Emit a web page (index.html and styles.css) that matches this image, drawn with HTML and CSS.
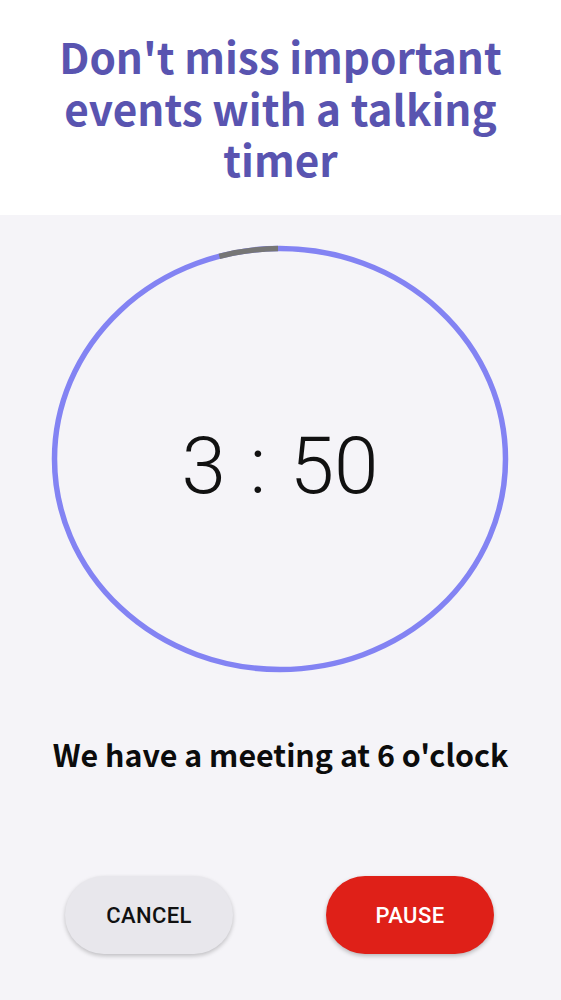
FILE: index.html
```html
<!DOCTYPE html>
<html>
<head>
<meta charset="utf-8">
<link rel="stylesheet" href="styles.css">
</head>
<body>
<header class="hero">
  <h1 class="title">Don't miss important events with a talking timer</h1>
</header>
<main class="screen">
  <div class="dial">
    <svg class="ring" width="561" height="460" viewBox="0 230 561 460">
      <ellipse cx="280" cy="459" rx="225.5" ry="210.5" fill="none" stroke="#8383f3" stroke-width="5.5"/>
      <path d="M 219.3 256.3 A 225.5 210.5 0 0 1 278 248.5" fill="none" stroke="#767676" stroke-width="5.5"/>
    </svg>
    <div class="time">3 : 50</div>
  </div>
  <p class="message">We have a meeting at 6 o'clock</p>
  <div class="actions">
    <button class="btn btn-cancel">CANCEL</button>
    <button class="btn btn-pause">PAUSE</button>
  </div>
</main>
</body>
</html>
```
FILE: styles.css
```css
html, body {
  margin: 0;
  padding: 0;
}
body {
  width: 561px;
  height: 1000px;
  overflow: hidden;
  background: #f5f4f8;
}
.hero {
  height: 215px;
  background: #ffffff;
  box-sizing: border-box;
  padding: 30px 40px 0;
}
.title {
  margin: 0;
  text-align: center;
  font-family: "Noto Sans CJK JP", "Noto Sans", sans-serif;
  font-weight: 700;
  font-size: 42.3px;
  line-height: 51.5px;
  color: #5954b0;
}
.screen {
  display: flex;
  flex-direction: column;
  align-items: stretch;
}
.dial {
  margin-top: 15px;
  display: grid;
  height: 460px;
}
.ring, .time {
  grid-area: 1 / 1;
}
.ring {
  display: block;
}
.time {
  align-self: center;
  justify-self: center;
  margin-left: -1px;
  margin-top: 12px;
  font-family: Roboto, sans-serif;
  font-weight: 300;
  font-size: 80px;
  word-spacing: 4px;
  color: #111;
  line-height: 1;
}
.message {
  margin: 42px 0 0;
  text-align: center;
  font-family: "Noto Sans CJK JP", "Noto Sans", sans-serif;
  font-weight: 700;
  font-size: 30.4px;
  line-height: 44px;
  color: #0c0c0c;
}
.actions {
  display: flex;
  justify-content: space-between;
  padding: 0 67px 0 65px;
  margin-top: 100px;
}
.btn {
  width: 168px;
  height: 78px;
  border: none;
  border-radius: 39px;
  font-family: Roboto, sans-serif;
  font-weight: 500;
  font-size: 22px;
  letter-spacing: 0.4px;
}
.btn-cancel {
  background: #e8e7ec;
  color: #111;
  box-shadow: 0 2px 4px rgba(0,0,0,0.22);
}
.btn-pause {
  background: #df2018;
  color: #fff;
  box-shadow: 0 2px 4px rgba(0,0,0,0.25);
}
```
